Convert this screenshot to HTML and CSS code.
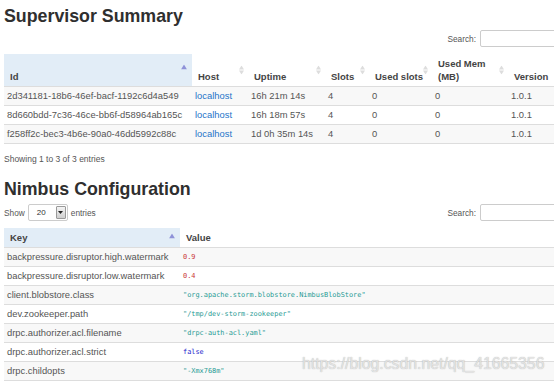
FILE: index.html
```html
<!DOCTYPE html>
<html>
<head>
<title>Storm UI</title>
<link rel="stylesheet" href="styles.css">
</head>
<body>
<div class="page">
  <h2 class="title">Supervisor Summary</h2>
  <div class="toolbar">
    <span></span>
    <label class="search">Search: <span class="input"></span></label>
  </div>
  <table class="grid">
    <colgroup>
      <col style="width:188px"><col style="width:56px"><col style="width:77px"><col style="width:44px"><col style="width:63px"><col style="width:76px"><col style="width:92px">
    </colgroup>
    <thead>
      <tr>
        <th class="sorted">Id<svg class="sort-icon" width="6" height="5" viewBox="0 0 6 5"><path d="M0 5 L3 0 L6 5 Z" fill="#8f92d8"/></svg></th>
        <th>Host<svg class="sort-icon" width="5" height="9" viewBox="0 0 5 9"><path d="M0 4 L2.5 0 L5 4 Z M0 5 L2.5 9 L5 5 Z" fill="#ddd"/></svg></th>
        <th>Uptime<svg class="sort-icon" width="5" height="9" viewBox="0 0 5 9"><path d="M0 4 L2.5 0 L5 4 Z M0 5 L2.5 9 L5 5 Z" fill="#ddd"/></svg></th>
        <th>Slots<svg class="sort-icon" width="5" height="9" viewBox="0 0 5 9"><path d="M0 4 L2.5 0 L5 4 Z M0 5 L2.5 9 L5 5 Z" fill="#ddd"/></svg></th>
        <th>Used slots<svg class="sort-icon" width="5" height="9" viewBox="0 0 5 9"><path d="M0 4 L2.5 0 L5 4 Z M0 5 L2.5 9 L5 5 Z" fill="#ddd"/></svg></th>
        <th>Used Mem<br>(MB)<svg class="sort-icon" width="5" height="9" viewBox="0 0 5 9"><path d="M0 4 L2.5 0 L5 4 Z M0 5 L2.5 9 L5 5 Z" fill="#ddd"/></svg></th>
        <th>Version</th>
      </tr>
    </thead>
    <tbody>
      <tr><td>2d341181-18b6-46ef-bacf-1192c6d4a549</td><td><a href="#">localhost</a></td><td>16h 21m 14s</td><td>4</td><td>0</td><td>0</td><td>1.0.1</td></tr>
      <tr><td>8d660bdd-7c36-46ce-bb6f-d58964ab165c</td><td><a href="#">localhost</a></td><td>16h 18m 57s</td><td>4</td><td>0</td><td>0</td><td>1.0.1</td></tr>
      <tr><td>f258ff2c-bec3-4b6e-90a0-46dd5992c88c</td><td><a href="#">localhost</a></td><td>1d 0h 35m 14s</td><td>4</td><td>0</td><td>0</td><td>1.0.1</td></tr>
    </tbody>
  </table>
  <div class="info">Showing 1 to 3 of 3 entries</div>

  <h2 class="title second">Nimbus Configuration</h2>
  <div class="toolbar">
    <label class="length">Show
      <span class="select"><span class="select-value">20</span><span class="select-btn"><svg width="5" height="3" viewBox="0 0 5 3"><path d="M0 0 L5 0 L2.5 3 Z" fill="#222"/></svg></span></span>
      entries</label>
    <label class="search">Search: <span class="input"></span></label>
  </div>
  <table class="grid config">
    <colgroup>
      <col style="width:176px"><col style="width:420px">
    </colgroup>
    <thead>
      <tr>
        <th class="sorted">Key<svg class="sort-icon" width="6" height="5" viewBox="0 0 6 5"><path d="M0 5 L3 0 L6 5 Z" fill="#8f92d8"/></svg></th>
        <th>Value</th>
      </tr>
    </thead>
    <tbody>
      <tr><td>backpressure.disruptor.high.watermark</td><td><code class="num">0.9</code></td></tr>
      <tr><td>backpressure.disruptor.low.watermark</td><td><code class="num">0.4</code></td></tr>
      <tr><td>client.blobstore.class</td><td><code class="str">"org.apache.storm.blobstore.NimbusBlobStore"</code></td></tr>
      <tr><td>dev.zookeeper.path</td><td><code class="str">"/tmp/dev-storm-zookeeper"</code></td></tr>
      <tr><td>drpc.authorizer.acl.filename</td><td><code class="str">"drpc-auth-acl.yaml"</code></td></tr>
      <tr><td>drpc.authorizer.acl.strict</td><td><code class="bool">false</code></td></tr>
      <tr><td>drpc.childopts</td><td><code class="str">"-Xmx768m"</code></td></tr>
    </tbody>
  </table>
</div>
<div class="watermark">https://blog.csdn.net/qq_41665356</div>
</body>
</html>
```

FILE: styles.css
```css
html, body {
    overflow: hidden;
}

body {
    margin: 0;
    padding: 0 0 0 4px;
    background-color: #fff;
    font-family: "Liberation Sans", Arial, sans-serif;
    font-size: 9.4px;
    color: #555;
}

.page {
    width: 596px;
}

.title {
    margin: 6px 0 0;
    font-size: 17.8px;
    line-height: 20px;
    font-weight: bold;
    color: #2f2f2f;
}

.title.second {
    margin-top: 14px;
}

.toolbar {
    display: flex;
    justify-content: space-between;
    align-items: center;
    height: 17px;
    margin-top: 4px;
    font-size: 8.3px;
    color: #555;
}

.second + .toolbar {
    margin-top: 5px;
}

.search {
    display: flex;
    align-items: center;
    gap: 4px;
}

.input {
    display: block;
    width: 118px;
    height: 15px;
    border: 1px solid #ccc;
    border-radius: 2px;
    background: #fff;
}

.length {
    display: flex;
    align-items: center;
    gap: 3px;
}

.select {
    display: flex;
    width: 38px;
    height: 15px;
    border: 1px solid #ccc;
    border-radius: 2px;
    background: #fff;
}

.select-value {
    flex: 1;
    padding-left: 8px;
    line-height: 15px;
    font-size: 8px;
    color: #333;
}

.select-btn {
    display: flex;
    align-items: center;
    justify-content: center;
    width: 8px;
    margin: 1px;
    border: 1px solid #9a9a9a;
    border-radius: 1px;
    background: linear-gradient(#f4f4f4, #cfcfcf);
}

.grid {
    width: 596px;
    margin-top: 7px;
    border-collapse: collapse;
    table-layout: fixed;
    border-bottom: 1px solid #ddd;
}

.grid th {
    position: relative;
    padding: 3px 6px 3px 6px;
    line-height: 13px;
    font-size: 9.5px;
    font-weight: bold;
    color: #444;
    text-align: left;
    vertical-align: bottom;
    border-bottom: 1px solid #ddd;
}

.grid th.sorted {
    background-color: #e2edf7;
}

.sort-icon {
    position: absolute;
    right: 4px;
    top: 50%;
    transform: translateY(-50%);
}

.grid th.sorted .sort-icon {
    top: 40%;
    right: 5px;
}

.grid td {
    height: 12px;
    padding: 3px 3px;
    line-height: 12px;
    border-top: 1px solid #ddd;
    white-space: nowrap;
    overflow: hidden;
}

.grid tbody tr:nth-child(odd) td {
    background-color: #f8f8f8;
}

.grid a {
    color: #2574c9;
    text-decoration: none;
}

.info {
    margin-top: 9px;
    line-height: 12px;
    font-size: 8.5px;
    color: #555;
}

code {
    display: inline-block;
    vertical-align: top;
    line-height: 12px;
    font-family: "DejaVu Sans Mono", "Liberation Mono", monospace;
    font-size: 6.9px;
}

code.num {
    color: #c93333;
}

code.str {
    color: #1f9a94;
}

code.bool {
    color: #2222cc;
}

.watermark {
    position: absolute;
    left: 302px;
    top: 355px;
    font-size: 15.8px;
    line-height: 18px;
    color: rgba(235, 235, 235, 0.85);
    text-shadow: 0 0 1px rgba(150, 150, 150, 0.8);
    white-space: nowrap;
}
```
